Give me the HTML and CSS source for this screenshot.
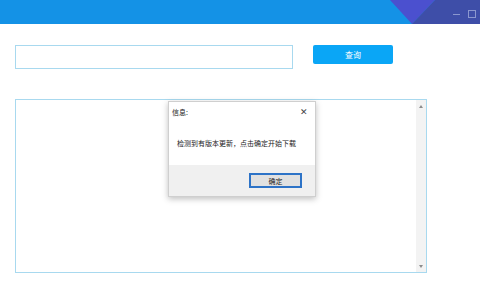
FILE: index.html
```
<!DOCTYPE html>
<html lang="zh-CN">
<head>
    <meta charset="UTF-8">
    <title>查询</title>
    <link rel="stylesheet" href="styles.css">
</head>
<body>
    <!-- Верхняя полоса окна -->
    <div class="titlebar">
        <svg class="titlebar-deco" width="90" height="24" viewBox="0 0 90 24">
            <polygon points="0,0 45,0 22,24" fill="#4b50cf"/>
            <polygon points="45,0 90,0 90,24 22,24" fill="#3e4ea8"/>
            <line x1="63" y1="14.5" x2="70" y2="14.5" stroke="#8b97cf" stroke-width="1"/>
            <rect x="78.5" y="10.5" width="7" height="7" fill="none" stroke="#8b97cf" stroke-width="1"/>
        </svg>
    </div>

    <div class="main">
        <div class="search-row">
            <input type="text" class="search-input">
            <button class="search-btn">查询</button>
        </div>

        <div class="log-box">
            <div class="log-content"></div>
            <div class="scrollbar">
                <span class="arrow-up"></span>
                <span class="arrow-down"></span>
            </div>
        </div>
    </div>

    <!-- Диалог с сообщением -->
    <div class="dialog">
        <div class="dialog-title">
            <span>信息:</span>
            <span class="dialog-close">✕</span>
        </div>
        <div class="dialog-body">检测到有版本更新，点击确定开始下载</div>
        <div class="dialog-footer">
            <button class="dialog-ok">确定</button>
        </div>
    </div>
</body>
</html>
```
FILE: styles.css
```
body {
    margin: 0;
    width: 480px;
    height: 300px;
    background: #fff;
    font-family: "Noto Sans CJK SC", "Noto Sans", sans-serif;
    position: relative;
    overflow: hidden;
}
.titlebar {
    height: 24px;
    background: #1492e6;
    display: flex;
    justify-content: flex-end;
}
.titlebar-deco {
    display: block;
}
.main {
    padding: 21px 0 0 15px;
}
.search-row {
    display: flex;
    align-items: flex-start;
    gap: 20px;
}
.search-input {
    box-sizing: border-box;
    width: 278px;
    height: 24px;
    margin: 0;
    border: 1px solid #a8d9ef;
    outline: none;
}
.search-btn {
    width: 80px;
    height: 19px;
    padding: 0;
    border: none;
    border-radius: 2px;
    background: #0aa6f6;
    color: #fff;
    font-family: inherit;
    font-size: 8px;
}
.log-box {
    box-sizing: border-box;
    margin-top: 30px;
    width: 412px;
    height: 174px;
    border: 1px solid #a8d9ef;
    display: flex;
}
.log-content {
    flex: 1;
}
.scrollbar {
    width: 10px;
    background: #f3f3f3;
    display: flex;
    flex-direction: column;
    justify-content: space-between;
    align-items: center;
    padding: 5px 0 4px;
}
.arrow-up {
    border: 2.5px solid transparent;
    border-bottom: 3px solid #8c8c8c;
    border-top: none;
}
.arrow-down {
    border: 2.5px solid transparent;
    border-top: 3px solid #8c8c8c;
    border-bottom: none;
}
.dialog {
    position: absolute;
    left: 168px;
    top: 101px;
    width: 148px;
    height: 96px;
    box-sizing: border-box;
    border: 1px solid #cfcfcf;
    background: #fff;
    box-shadow: 0 2px 6px rgba(0, 0, 0, 0.25);
    display: flex;
    flex-direction: column;
    font-size: 7px;
    color: #222;
}
.dialog-title {
    height: 19px;
    display: flex;
    justify-content: space-between;
    align-items: center;
    padding: 0 7px 0 3px;
}
.dialog-close {
    font-size: 9px;
    color: #444;
}
.dialog-body {
    height: 44px;
    display: flex;
    align-items: center;
    padding-left: 8px;
}
.dialog-footer {
    flex: 1;
    background: #f0f0f0;
    display: flex;
    justify-content: flex-end;
    align-items: flex-start;
    padding: 8px 13px 0 0;
}
.dialog-ok {
    box-sizing: border-box;
    width: 53px;
    height: 15px;
    padding: 0;
    border: 2px solid #2d73c7;
    background: #e1e1e1;
    font-family: inherit;
    font-size: 7px;
    color: #222;
}
```
